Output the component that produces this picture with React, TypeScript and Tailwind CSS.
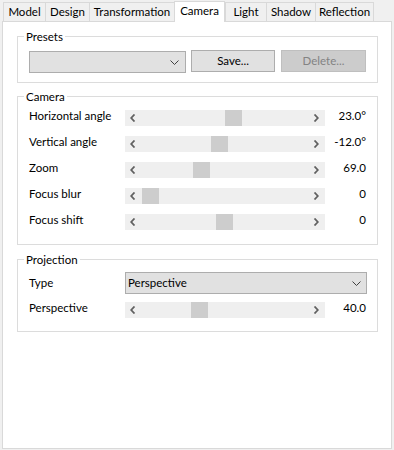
import React from "react";

const tabs = [
  { name: "Model", w: "w-[42px]" },
  { name: "Design", w: "w-[44px]" },
  { name: "Transformation", w: "w-[85px]" },
  { name: "Camera", w: "w-[51px]", active: true },
  { name: "Light", w: "w-[41px]" },
  { name: "Shadow", w: "w-[49px]" },
  { name: "Reflection", w: "w-[59px]", last: true },
];

const cameraRows = [
  { label: "Horizontal angle", pos: 100, value: "23.0°" },
  { label: "Vertical angle", pos: 86, value: "-12.0°" },
  { label: "Zoom", pos: 68, value: "69.0" },
  { label: "Focus blur", pos: 17, value: "0" },
  { label: "Focus shift", pos: 91, value: "0" },
];

function Chevron() {
  return (
    <svg width="9" height="5" viewBox="0 0 9 5" className="shrink-0">
      <path d="M0.5 0.5 L4.5 4.5 L8.5 0.5" fill="none" stroke="#404040" strokeWidth="1" />
    </svg>
  );
}

function Slider({ pos }: { pos: number }) {
  return (
    <div className="relative w-[200px] h-[16px] bg-[#efefef] shrink-0 flex items-center justify-between pl-[5px] pr-[6px]">
      <svg width="6" height="8" viewBox="0 0 6 8">
        <path d="M4.5 0.5 L1.2 4 L4.5 7.5" fill="none" stroke="#606060" strokeWidth="1.8" />
      </svg>
      <svg width="6" height="8" viewBox="0 0 6 8">
        <path d="M1.5 0.5 L4.8 4 L1.5 7.5" fill="none" stroke="#606060" strokeWidth="1.8" />
      </svg>
      {/* thumb */}
      <div className="absolute top-0 h-[16px] w-[17px] bg-[#cdcdcd]" style={{ left: pos }} />
    </div>
  );
}

function Group({ title, className, children }: { title: string; className?: string; children: React.ReactNode }) {
  return (
    <div className={`relative border border-[#dcdcdc] ${className ?? ""}`}>
      <span className="absolute -top-[8px] left-[6px] px-[2px] bg-white leading-[16px]">{title}</span>
      {children}
    </div>
  );
}

export default function App() {
  return (
    <div
      className="w-[394px] h-[450px] bg-[#f0f0f0] text-[11.5px] text-black px-[2px] overflow-hidden"
      style={{ fontFamily: 'Lato, "Liberation Sans", sans-serif' }}
    >
      {/* Tab strip */}
      <div className="flex items-end h-[21px] pl-px">
        {tabs.map((t) =>
          t.active ? (
            <div
              key={t.name}
              className={`${t.w} h-[21px] -mb-px z-10 bg-white border-l border-r border-t border-[#d9d9d9] flex items-center justify-center pb-[2px] leading-none`}
            >
              {t.name}
            </div>
          ) : (
            <div
              key={t.name}
              className={`${t.w} h-[19px] bg-[#f0f0f0] border-l border-t border-[#d9d9d9] ${t.last ? "border-r" : ""} flex items-center justify-center leading-none`}
            >
              {t.name}
            </div>
          )
        )}
      </div>

      {/* Panel */}
      <div className="relative h-[428px] w-[390px] bg-white border border-[#d9d9d9] pt-[14px] pl-[14px] pr-[13px] flex flex-col">
        <Group title="Presets" className="h-[47px] pt-[13px] px-[11px]">
          <div className="flex items-start">
            <div className="mt-px w-[157px] h-[22px] bg-[#e1e1e1] border border-[#adadad] flex items-center justify-end pr-[6px]">
              <Chevron />
            </div>
            <div className="ml-[5px] w-[84px] h-[22px] bg-[#e1e1e1] border border-[#adadad] flex items-center justify-center">
              Save...
            </div>
            <div className="ml-[6px] w-[85px] h-[22px] bg-[#cccccc] border border-[#bfbfbf] text-[#838383] flex items-center justify-center">
              Delete...
            </div>
          </div>
        </Group>

        <Group title="Camera" className="mt-[13px] h-[149px] pt-[13px] px-[11px]">
          <div className="flex flex-col gap-[10px]">
            {cameraRows.map((r) => (
              <div key={r.label} className="flex items-center h-[16px]">
                <span className="w-[96px] shrink-0 mb-[4px]">{r.label}</span>
                <Slider pos={r.pos} />
                <span className="flex-1 text-right mb-[4px]">{r.value}</span>
              </div>
            ))}
          </div>
        </Group>

        <Group title="Projection" className="mt-[14px] h-[73px] pt-[12px] px-[11px]">
          <div className="flex items-center h-[22px]">
            <span className="w-[96px] shrink-0">Type</span>
            <div className="w-[242px] h-[22px] -mr-px bg-[#e1e1e1] border border-[#adadad] flex items-center justify-between pl-[2px] pr-[5px]">
              <span>Perspective</span>
              <Chevron />
            </div>
          </div>
          <div className="mt-[8px] flex items-center h-[16px]">
            <span className="w-[96px] shrink-0 mb-[4px]">Perspective</span>
            <Slider pos={66} />
            <span className="flex-1 text-right mb-[4px]">40.0</span>
          </div>
        </Group>
      </div>
    </div>
  );
}
